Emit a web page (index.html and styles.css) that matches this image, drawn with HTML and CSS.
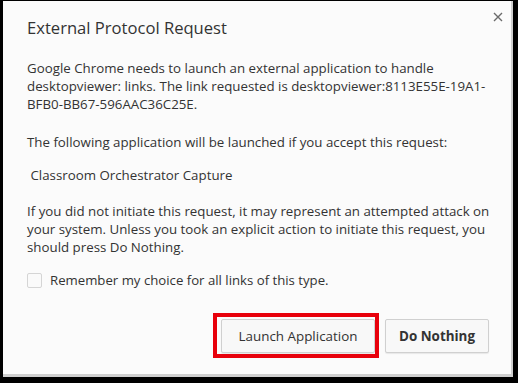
FILE: index.html
```html
<!DOCTYPE html>
<html>
<head>
<meta charset="utf-8">
<link rel="stylesheet" href="styles.css">
</head>
<body>
<div class="dialog">
  <div class="header">
    <h1 class="title">External Protocol Request</h1>
    <span class="close">
      <svg width="10" height="10" viewBox="0 0 10 10"><path d="M1 1 L9 9 M9 1 L1 9" stroke="#6b6b6b" stroke-width="1.4" fill="none"/></svg>
    </span>
  </div>
  <p class="para first">Google Chrome needs to launch an external application to handle<br>desktopviewer: links. The link requested is desktopviewer:8113E55E-19A1-<br>BFB0-BB67-596AAC36C25E.</p>
  <p class="para gap1">The following application will be launched if you accept this request:</p>
  <p class="para app">&nbsp;Classroom Orchestrator Capture</p>
  <p class="para warn">If you did not initiate this request, it may represent an attempted attack on<br>your system. Unless you took an explicit action to initiate this request, you<br>should press Do Nothing.</p>
  <label class="remember"><span class="box"></span>Remember my choice for all links of this type.</label>
  <div class="buttons">
    <span class="hl-wrap">
      <button class="btn">Launch Application</button>
      <span class="highlight"></span>
    </span>
    <button class="btn bold">Do Nothing</button>
  </div>
</div>
</body>
</html>
```
FILE: styles.css
```css
html, body { margin: 0; padding: 0; }
body {
  background: #000;
  width: 518px;
  height: 383px;
  overflow: hidden;
  font-family: "Open Sans", "Noto Sans", sans-serif;
  color: #333;
}
.dialog {
  margin: 1px 5px 0 3px;
  height: 376px;
  box-sizing: border-box;
  background: #fbfbfb;
  border-right: 2px solid #cfcfcf;
  border-bottom: 3px solid #cfcfcf;
  padding: 0 0 0 24px;
}
.header {
  display: flex;
  justify-content: space-between;
  align-items: flex-start;
  padding-top: 15px;
  padding-right: 8px;
}
.title {
  margin: 0;
  font-weight: normal;
  font-size: 16.6px;
  line-height: 24px;
  color: #333;
}
.close {
  display: flex;
  margin-top: -4px;
}
.para {
  margin: 14px 0 0 0;
  font-size: 13.3px;
  line-height: 18px;
  width: 486px;
  white-space: nowrap;
}
.first { margin-top: 19px; }
.gap1 { margin-top: 20px; }
.app { margin-top: 15px; }
.warn { margin-top: 18px; }
.remember {
  display: flex;
  align-items: center;
  margin-top: 15px;
  font-size: 13.2px;
  line-height: 18px;
}
.box {
  width: 15px;
  height: 15px;
  border: 1px solid #d5d5d5;
  border-radius: 2px;
  background: #fafafa;
  margin-right: 8px;
  box-sizing: border-box;
}
.buttons {
  display: flex;
  justify-content: flex-end;
  gap: 10px;
  margin-top: 30px;
  padding-right: 22px;
}
.hl-wrap { position: relative; display: flex; }
.btn {
  font-family: inherit;
  font-size: 13.4px;
  color: #333;
  background: #f8f8f8;
  border: 1px solid #d0d0d0;
  border-radius: 2px;
  box-shadow: 0 1px 1px rgba(0,0,0,0.08);
  height: 34px;
  padding: 0 10px;
}
.hl-wrap .btn { width: 154px; }
.bold { font-weight: bold; width: 104px; }
.highlight {
  position: absolute;
  left: -8px;
  top: -6px;
  right: -4px;
  bottom: -5px;
  border: 4px solid #e8000b;
  pointer-events: none;
}
```
